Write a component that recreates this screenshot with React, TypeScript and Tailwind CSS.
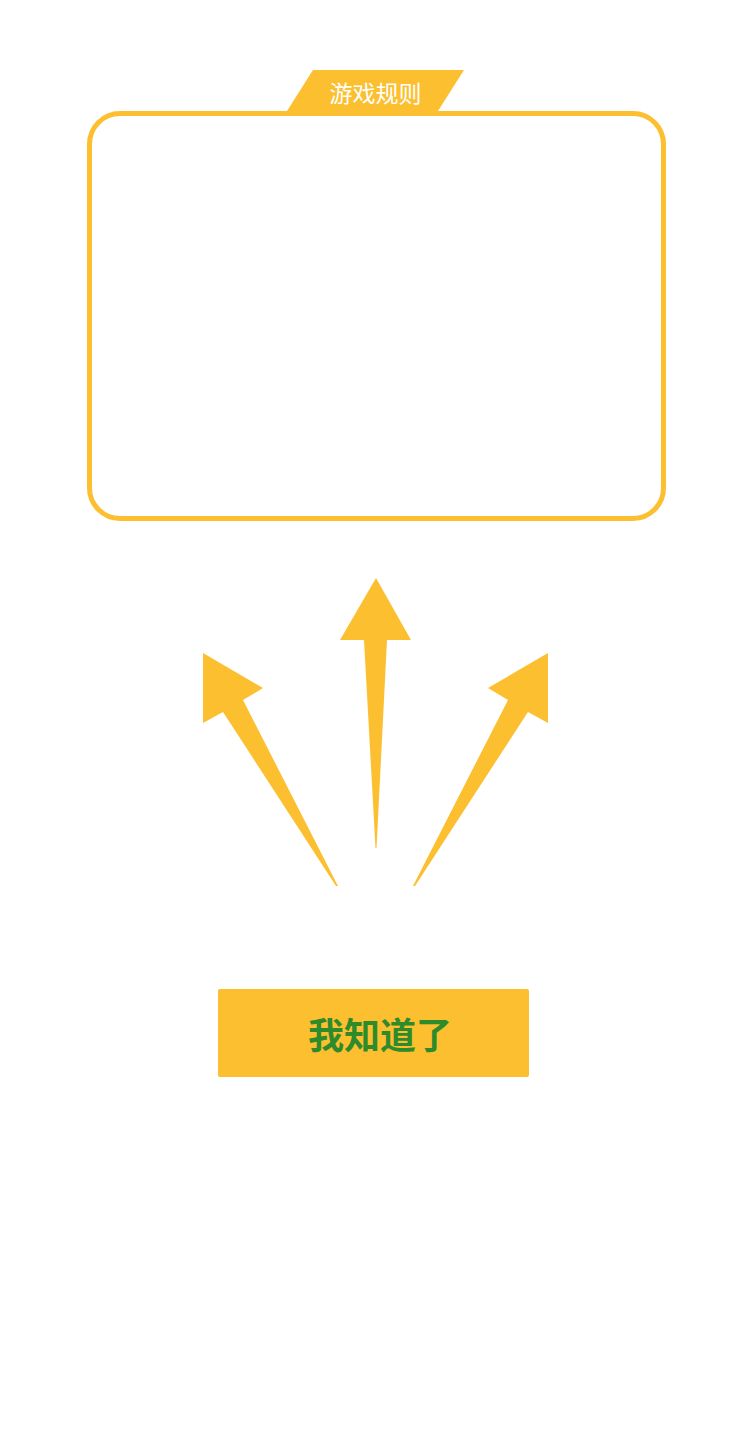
import React from 'react';

const YELLOW = '#fcbf30';

const Arrows: React.FC = () => (
  <svg width="750" height="330" viewBox="0 570 750 330" className="block">
    <g fill={YELLOW}>
      {/* middle */}
      <polygon points="376,578 411,640 387,640 376.5,848 375.5,848 364,640 340,640" />
      {/* left */}
      <polygon points="203,653 263,688 243,700 338,886 336,886 223,712 203,723" />
      {/* right */}
      <polygon points="548,653 488,688 508,700 413,886 415,886 528,712 548,723" />
    </g>
  </svg>
);

export default function App() {
  return (
    <div className="w-[750px] min-h-[1448px] bg-white pt-[70px] font-['Noto_Sans_CJK_SC','Noto_Sans',sans-serif]">
      <div className="ml-[87px] w-[579px]">
        <div className="ml-[200px] w-[177px] h-[41px] bg-[#fcbf30] [clip-path:polygon(26px_0,177px_0,151px_41px,0_41px)] flex items-center justify-center pt-[4px]">
          <span className="text-white text-[23px] leading-none">游戏规则</span>
        </div>
        <div className="h-[410px] border-[5px] border-[#fcbf30] rounded-[33px]" />
      </div>

      <div className="mt-[49px]">
        <Arrows />
      </div>

      <div className="mt-[89px] ml-[218px] w-[311px] h-[88px] bg-[#fcbf30] rounded-[2px] flex items-center justify-center pl-[13px] pb-[1px]">
        <span className="text-[#2e8b2c] text-[36px] font-bold leading-none">我知道了</span>
      </div>
    </div>
  );
}
